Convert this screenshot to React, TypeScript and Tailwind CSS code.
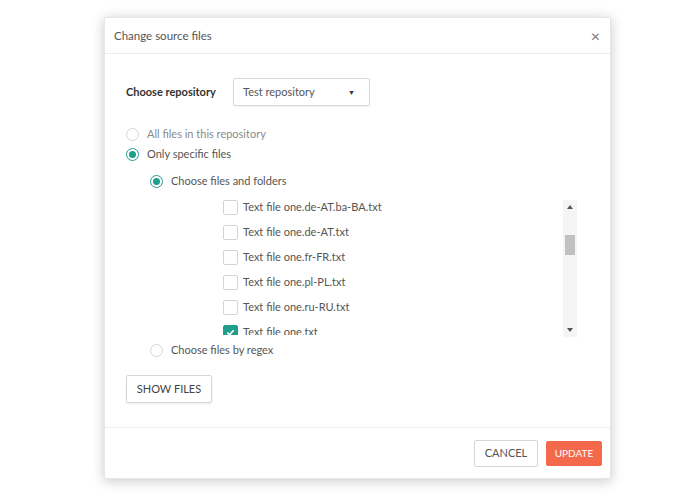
import { useState } from 'react';

const files = [
    { name: 'Text file one.de-AT.ba-BA.txt', checked: false },
    { name: 'Text file one.de-AT.txt', checked: false },
    { name: 'Text file one.fr-FR.txt', checked: false },
    { name: 'Text file one.pl-PL.txt', checked: false },
    { name: 'Text file one.ru-RU.txt', checked: false },
    { name: 'Text file one.txt', checked: true },
];

function Radio({ checked, label, muted }: { checked: boolean; label: string; muted?: boolean }) {
    return (
        <div className="flex items-center h-[20px] gap-[8px]">
            <span
                className={`w-[13px] h-[13px] rounded-full border flex items-center justify-center bg-white ${
                    checked ? 'border-[#1f9e8b]' : 'border-[#d6d6d6]'
                }`}
            >
                {checked && <span className="w-[7px] h-[7px] rounded-full bg-[#1f9e8b]" />}
            </span>
            <span className={`text-[11px] ${muted ? 'text-[#8a8a8a]' : 'text-[#555]'}`}>{label}</span>
        </div>
    );
}

export default function App() {
    const [repo] = useState('Test repository');

    return (
        <div className="w-[700px] h-[500px] bg-white pt-[17px] pl-[104px]" style={{ fontFamily: 'Lato, "Open Sans", sans-serif' }}>
            <div className="w-[507px] h-[462px] bg-white flex flex-col border border-[#e6e6e6] shadow-[0_2px_12px_rgba(0,0,0,0.22)]">
                {/* Header */}
                <div className="h-[36px] flex items-center justify-between pl-[9px] pr-[10px] border-b border-[#ececec]">
                    <span className="text-[11.5px] text-[#555]">Change source files</span>
                    <span className="text-[16px] leading-none text-[#777]">×</span>
                </div>

                {/* Body */}
                <div className="flex-1 flex flex-col pl-[21px]">
                    <div className="flex items-center mt-[24px]">
                        <span className="w-[107px] text-[11px] font-bold text-[#333]">Choose repository</span>
                        <div className="w-[137px] h-[28px] border border-[#d9d9d9] rounded-[2px] flex items-center justify-between pl-[9px] pr-[14px] shadow-[0_1px_2px_rgba(0,0,0,0.06)]">
                            <span className="text-[11px] text-[#555]">{repo}</span>
                            <span className="text-[7px] text-[#333]">▼</span>
                        </div>
                    </div>

                    <div className="mt-[18px]">
                        <Radio checked={false} label="All files in this repository" muted />
                        <Radio checked label="Only specific files" />
                    </div>

                    <div className="ml-[24px] mt-[7px]">
                        <Radio checked label="Choose files and folders" />
                    </div>

                    <div className="mt-[6px] ml-[89px] w-[362px] h-[140px] flex">
                        <div className="flex-1 h-[138px] overflow-hidden pl-[8px]">
                            <div className="-mt-[2px]">
                                {files.map((f) => (
                                    <div key={f.name} className="h-[25px] flex items-center gap-[5px]">
                                        <span
                                            className={`w-[15px] h-[15px] rounded-[2px] border flex items-center justify-center ${
                                                f.checked ? 'bg-[#1f9e8b] border-[#1f9e8b]' : 'bg-white border-[#d4d4d4]'
                                            }`}
                                        >
                                            {f.checked && (
                                                <svg width="11" height="11" viewBox="0 0 12 12" fill="none">
                                                    <path d="M2.5 6.2l2.4 2.4 4.6-5" stroke="white" strokeWidth="1.8" />
                                                </svg>
                                            )}
                                        </span>
                                        <span className="text-[11px] text-[#555]">{f.name}</span>
                                    </div>
                                ))}
                            </div>
                        </div>
                        {/* Scrollbar */}
                        <div className="w-[14px] mt-[3px] bg-[#f5f5f5] flex flex-col items-center">
                            <div className="h-[14px] flex items-center justify-center">
                                <span className="w-0 h-0 border-l-[3.5px] border-r-[3.5px] border-b-[4px] border-l-transparent border-r-transparent border-b-[#555]" />
                            </div>
                            <div className="mt-[21px] w-[10px] h-[20px] bg-[#c1c1c1]" />
                            <div className="flex-1" />
                            <div className="h-[14px] flex items-center justify-center">
                                <span className="w-0 h-0 border-l-[3.5px] border-r-[3.5px] border-t-[4px] border-l-transparent border-r-transparent border-t-[#555]" />
                            </div>
                        </div>
                    </div>

                    <div className="ml-[24px] mt-[3px]">
                        <Radio checked={false} label="Choose files by regex" />
                    </div>

                    <button className="mt-[15px] w-[86px] h-[28px] border border-[#d6d6d6] rounded-[2px] bg-white text-[11px] text-[#444] shadow-[0_1px_2px_rgba(0,0,0,0.08)]">
                        SHOW FILES
                    </button>
                </div>

                {/* Footer */}
                <div className="h-[51px] border-t border-[#ececec] flex items-center justify-end gap-[8px] pr-[8px]">
                    <button className="w-[64px] h-[27px] border border-[#d6d6d6] rounded-[2px] bg-white text-[11px] text-[#555]">
                        CANCEL
                    </button>
                    <button className="w-[56px] h-[25px] rounded-[2px] bg-[#f4694b] text-[10px] text-white">UPDATE</button>
                </div>
            </div>
        </div>
    );
}
